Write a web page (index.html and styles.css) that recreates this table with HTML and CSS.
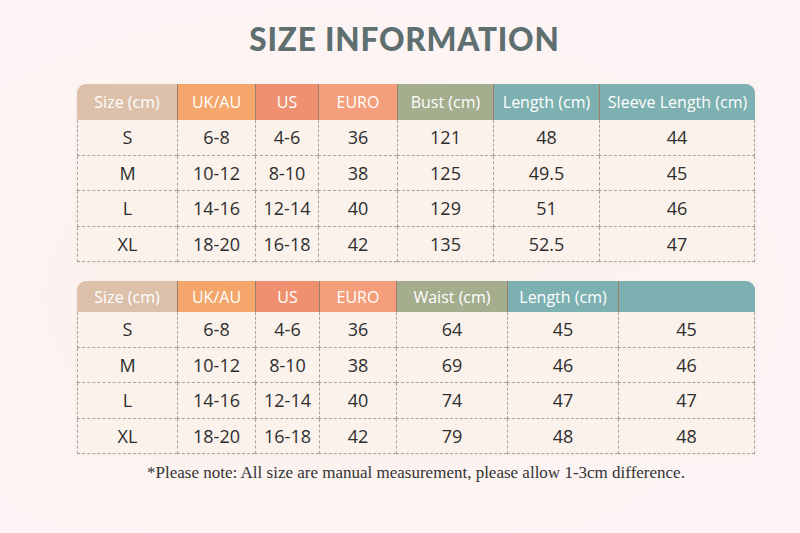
FILE: index.html
```html
<!DOCTYPE html>
<html lang="en">
<head>
    <meta charset="UTF-8">
    <meta name="viewport" content="width=device-width, initial-scale=1.0">
    <title>Size Information</title>
    <link rel="stylesheet" href="styles.css">
</head>
<body>
    <div class="page">
        <h1>SIZE INFORMATION</h1>

        <table class="size-table top">
            <colgroup>
                <col style="width:100px"><col style="width:78px"><col style="width:63px"><col style="width:79px">
                <col style="width:96px"><col style="width:106px"><col style="width:156px">
            </colgroup>
            <thead>
                <tr>
                    <th class="h-size">Size (cm)</th>
                    <th class="h-uk">UK/AU</th>
                    <th class="h-us">US</th>
                    <th class="h-euro">EURO</th>
                    <th class="h-sage">Bust (cm)</th>
                    <th class="h-teal">Length (cm)</th>
                    <th class="h-teal">Sleeve Length (cm)</th>
                </tr>
            </thead>
            <tbody>
                <tr><td>S</td><td>6-8</td><td>4-6</td><td>36</td><td>121</td><td>48</td><td>44</td></tr>
                <tr><td>M</td><td>10-12</td><td>8-10</td><td>38</td><td>125</td><td>49.5</td><td>45</td></tr>
                <tr><td>L</td><td>14-16</td><td>12-14</td><td>40</td><td>129</td><td>51</td><td>46</td></tr>
                <tr><td>XL</td><td>18-20</td><td>16-18</td><td>42</td><td>135</td><td>52.5</td><td>47</td></tr>
            </tbody>
        </table>

        <table class="size-table bottom">
            <colgroup>
                <col style="width:100px"><col style="width:78px"><col style="width:64px"><col style="width:77px">
                <col style="width:111px"><col style="width:111px"><col style="width:137px">
            </colgroup>
            <thead>
                <tr>
                    <th class="h-size">Size (cm)</th>
                    <th class="h-uk">UK/AU</th>
                    <th class="h-us">US</th>
                    <th class="h-euro">EURO</th>
                    <th class="h-sage">Waist (cm)</th>
                    <th class="h-teal">Length (cm)</th>
                    <th class="h-teal"></th>
                </tr>
            </thead>
            <tbody>
                <tr><td>S</td><td>6-8</td><td>4-6</td><td>36</td><td>64</td><td>45</td><td>45</td></tr>
                <tr><td>M</td><td>10-12</td><td>8-10</td><td>38</td><td>69</td><td>46</td><td>46</td></tr>
                <tr><td>L</td><td>14-16</td><td>12-14</td><td>40</td><td>74</td><td>47</td><td>47</td></tr>
                <tr><td>XL</td><td>18-20</td><td>16-18</td><td>42</td><td>79</td><td>48</td><td>48</td></tr>
            </tbody>
        </table>

        <p class="note">*Please note: All size are manual measurement, please allow 1-3cm difference.</p>
    </div>
</body>
</html>
```

FILE: styles.css
```css
body {
    margin: 0;
    background-color: #fdf5f5;
    font-family: "Open Sans", sans-serif;
    color: #333;
}

.page {
    width: 800px;
    height: 533px;
    display: flex;
    flex-direction: column;
    align-items: center;
    background: radial-gradient(ellipse at 40% 55%, #fbf1ea 0%, #fdf5f5 70%);
}

h1 {
    font-family: Lato, sans-serif;
    font-weight: 900;
    font-size: 31.5px;
    letter-spacing: 0.8px;
    color: #5f6f6f;
    margin: 19px 0 25px 9px;
    line-height: 40px;
}

.size-table {
    width: 678px;
    margin-left: 32px;
    table-layout: fixed;
    border-collapse: separate;
    border-spacing: 0;
    background-color: #fbf2ec;
    box-shadow: 0 1px 4px rgba(150, 110, 90, 0.08);
}

.size-table.top {
    margin-bottom: 19px;
}

.size-table th {
    height: 36px;
    padding: 0;
    font-weight: 400;
    font-size: 16px;
    color: #fff;
    text-align: center;
    border-left: 1px solid #9a7f6c;
    white-space: nowrap;
}

.size-table.bottom th {
    height: 31px;
}

.size-table th:first-child {
    border-left: none;
    border-top-left-radius: 9px;
}

.size-table th:last-child {
    border-top-right-radius: 9px;
}

.h-size { background-color: #dcc0aa; }
.h-uk { background-color: #f4a66b; }
.h-us { background-color: #ef9170; }
.h-euro { background-color: #f49e7b; }
.h-sage { background-color: #a4ad8e; }
.h-teal { background-color: #7db0b0; }

.size-table td {
    height: 34.5px;
    padding: 0;
    text-align: center;
    font-size: 18px;
    color: #2e2e2e;
    border-left: 1px dashed #aba29e;
    border-bottom: 1px dashed #aba29e;
}

.size-table td:last-child {
    border-right: 1px dashed #aba29e;
}

.note {
    font-family: "Liberation Serif", serif;
    font-size: 17px;
    color: #333;
    margin: 9px 0 0 32px;
}
```
